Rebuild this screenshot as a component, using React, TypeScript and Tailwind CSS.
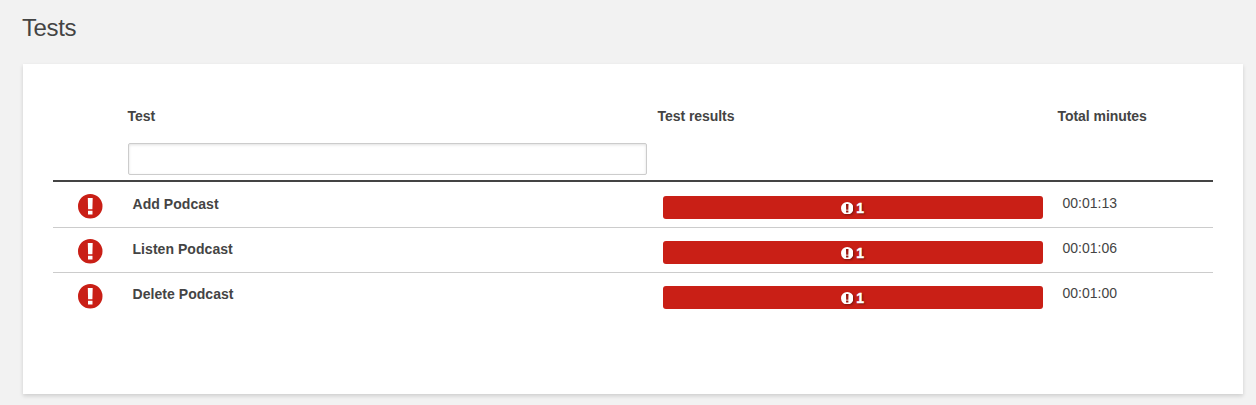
type TestRow = { name: string; failures: number; minutes: string };

const tests: TestRow[] = [
  { name: "Add Podcast", failures: 1, minutes: "00:01:13" },
  { name: "Listen Podcast", failures: 1, minutes: "00:01:06" },
  { name: "Delete Podcast", failures: 1, minutes: "00:01:00" },
];

function FailureIcon({ className }: { className: string }) {
  return (
    <svg viewBox="0 0 24 24" className={className} aria-hidden="true">
      <path
        fill="currentColor"
        fillRule="evenodd"
        d="M12 0a12 12 0 1 1 0 24a12 12 0 0 1 0-24ZM9.6 4l.3 11h4.2l.3-11ZM9.8 16.3v3.7h4.4v-3.7Z"
      />
    </svg>
  );
}

function ResultBar({ count }: { count: number }) {
  return (
    <div className="mt-3.5 mr-[15px] ml-[5px] flex h-[23px] items-center justify-center gap-[3px] rounded-[3px] bg-[#c91f16] pr-px text-sm font-bold text-white [text-shadow:1px_1px_2px_rgba(0,0,0,0.6)]">
      <FailureIcon className="mt-px size-[12.5px] drop-shadow-[1px_1px_1px_rgba(0,0,0,0.4)]" />
      <span className="mt-px [-webkit-text-stroke:0.4px_white]">{count}</span>
    </div>
  );
}

export default function App() {
  return (
    <main className="h-[405px] overflow-hidden bg-[#f2f2f2] px-[23px] pt-3 font-['Liberation_Sans',Arial,sans-serif] text-[#444]">
      <h1 className="-ml-px h-[52px] text-2xl leading-8 tracking-[-0.4px]">Tests</h1>
      <section className="h-[330px] w-[1220px] bg-white px-[30px] pt-[42px] shadow-[0_2px_4px_rgba(0,0,0,0.15)]">
        <div className="grid h-[76px] grid-cols-[75px_530px_400px_155px] border-b-2 border-[#444] text-sm font-bold tracking-[-0.05px]">
          <span />
          <div>
            <label htmlFor="test-filter" className="-ml-[0.5px] block h-[37px]">
              Test
            </label>
            <input
              id="test-filter"
              type="text"
              className="block h-8 w-[519px] rounded-[2px] border border-[#ccc] bg-white px-2 shadow-[inset_0_1px_3px_rgba(0,0,0,0.12)] outline-none"
            />
          </div>
          <span className="-ml-[0.5px]">Test results</span>
          <span className="-ml-[0.5px]">Total minutes</span>
        </div>
        <div className="divide-y divide-[#ccc]">
          {tests.map((test) => (
            <div
              key={test.name}
              className="grid h-[46px] grid-cols-[75px_530px_400px_155px] text-sm not-first:-mt-px"
            >
              <FailureIcon className="mt-3 ml-[25px] size-[24.5px] text-[#c91f16]" />
              <span className="mt-3 pl-[4.5px] font-bold tracking-[0.05px]">{test.name}</span>
              <ResultBar count={test.failures} />
              <span className="mt-[11px] pl-[4.5px]">{test.minutes}</span>
            </div>
          ))}
        </div>
      </section>
    </main>
  );
}
